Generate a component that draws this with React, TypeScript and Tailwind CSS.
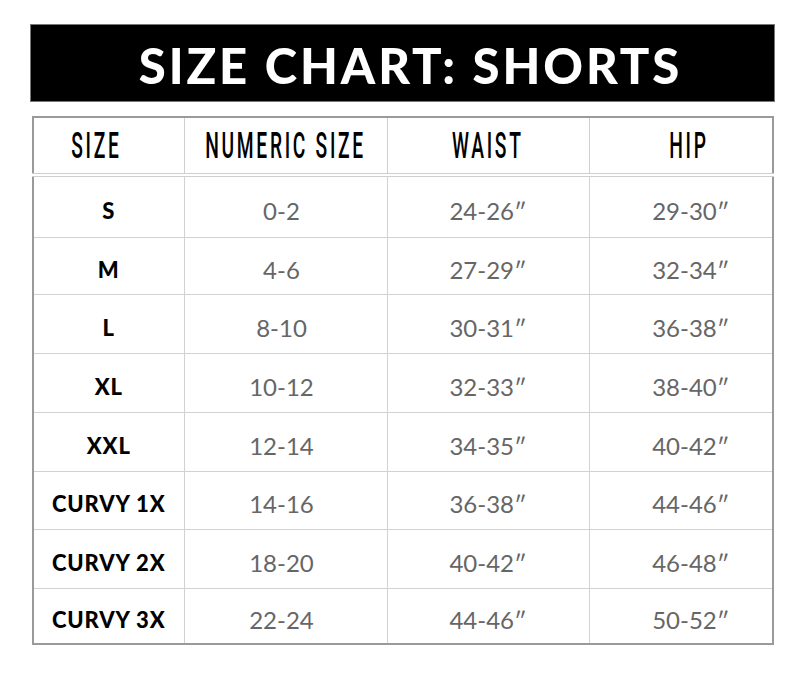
import React from "react";

const rows = [
  { size: "S", numeric: "0-2", waist: "24-26″", hip: "29-30″", h: "h-[62px]" },
  { size: "M", numeric: "4-6", waist: "27-29″", hip: "32-34″", h: "h-[57px]" },
  { size: "L", numeric: "8-10", waist: "30-31″", hip: "36-38″", h: "h-[59px]" },
  { size: "XL", numeric: "10-12", waist: "32-33″", hip: "38-40″", h: "h-[59px]" },
  { size: "XXL", numeric: "12-14", waist: "34-35″", hip: "40-42″", h: "h-[59px]" },
  { size: "CURVY 1X", numeric: "14-16", waist: "36-38″", hip: "44-46″", h: "h-[58px]" },
  { size: "CURVY 2X", numeric: "18-20", waist: "40-42″", hip: "46-48″", h: "h-[59px]" },
  { size: "CURVY 3X", numeric: "22-24", waist: "44-46″", hip: "50-52″", h: "h-[56px]" },
];

const HeadCell = ({ children, className = "" }: { children: React.ReactNode; className?: string }) => (
  <th className="border-r border-[#cfcfcf] p-0 font-normal last:border-r-0">
    <div className={`flex justify-center whitespace-nowrap ${className}`}>
      <span className="inline-block shrink-0 origin-center scale-x-[0.52] text-[37px] leading-none font-medium tracking-[0.14em] text-black [font-family:Roboto,sans-serif]">
        {children}
      </span>
    </div>
  </th>
);

const App = () => {
  return (
    <div className="w-[801px] h-[678px] bg-white pt-[24px] pl-[30px]">
      <div className="flex h-[78px] w-[745px] items-center justify-center border border-[#777] bg-black pl-4 pt-1">
        <h1 className="text-[49px] leading-none font-black tracking-[0.06em] text-white [font-family:Lato,sans-serif]">
          SIZE CHART: SHORTS
        </h1>
      </div>

      <table className="mt-[14px] ml-[2px] w-[742px] table-fixed border-collapse border-2 border-[#9a9a9a]">
        <colgroup>
          <col className="w-[151px]" />
          <col className="w-[203px]" />
          <col className="w-[202px]" />
          <col />
        </colgroup>
        <thead>
          <tr className="h-[58px] border-b-[4px] border-double border-[#cfcfcf]">
            <HeadCell className="pr-6">SIZE</HeadCell>
            <HeadCell>NUMERIC SIZE</HeadCell>
            <HeadCell>WAIST</HeadCell>
            <HeadCell className="pl-4">HIP</HeadCell>
          </tr>
        </thead>
        <tbody>
          {rows.map((r) => (
            <tr key={r.size} className={`${r.h} border-b border-[#d2d2d2] last:border-b-0`}>
              <td className="border-r border-[#d2d2d2] pt-[8px] text-center text-[22px] leading-none font-black tracking-[0.04em] whitespace-nowrap text-black [font-family:Lato,sans-serif]">
                {r.size}
              </td>
              <td className="border-r border-[#d2d2d2] pt-[8px] pr-2 text-center text-[24px] leading-none text-[#666] [font-family:Lato,sans-serif]">
                {r.numeric}
              </td>
              <td className="border-r border-[#d2d2d2] pt-[8px] text-center text-[24px] leading-none text-[#666] [font-family:Lato,sans-serif]">
                {r.waist}
              </td>
              <td className="pt-[8px] pl-5 text-center text-[24px] leading-none text-[#666] [font-family:Lato,sans-serif]">
                {r.hip}
              </td>
            </tr>
          ))}
        </tbody>
      </table>
    </div>
  );
};

export default App;
